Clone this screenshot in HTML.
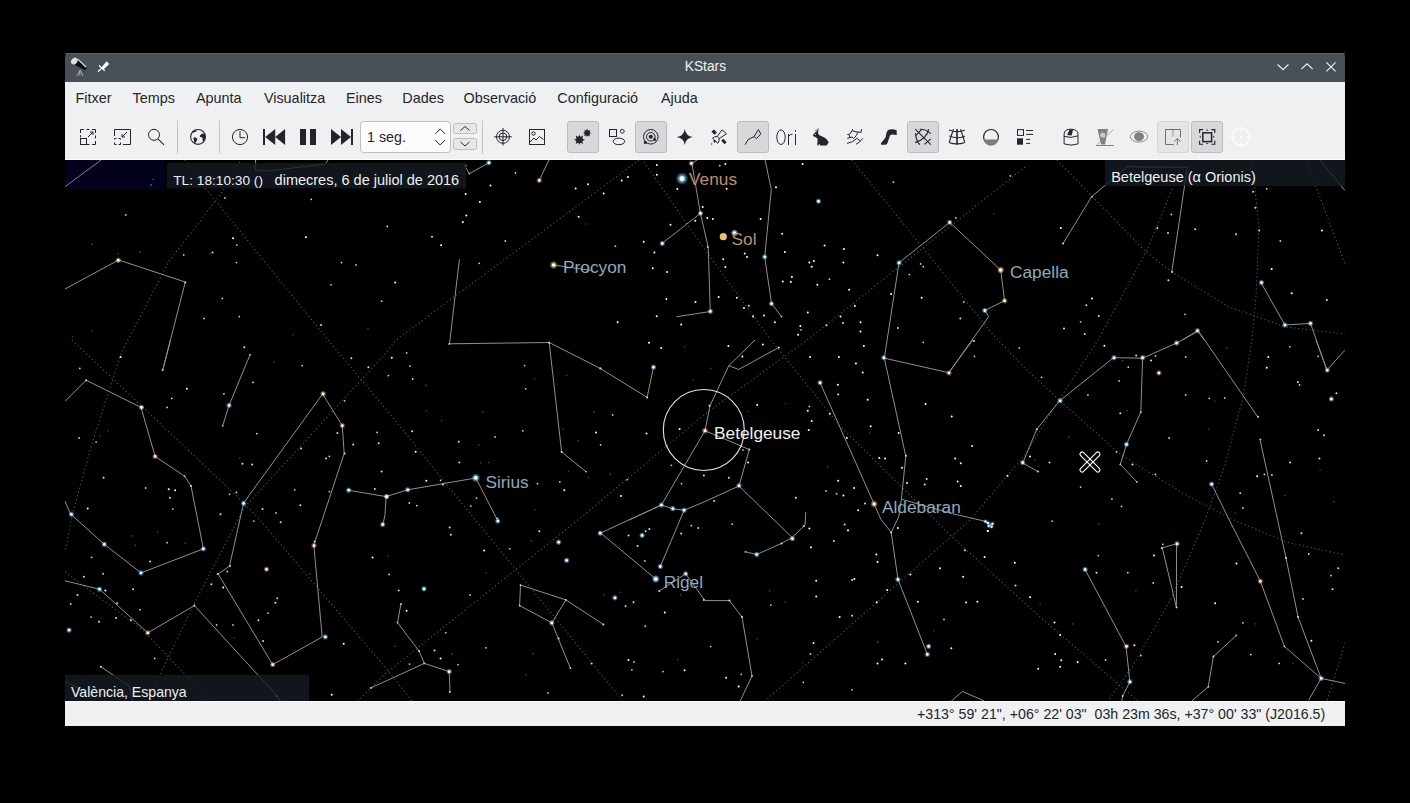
<!DOCTYPE html>
<html><head><meta charset="utf-8">
<style>
html,body{margin:0;padding:0;background:#000;width:1410px;height:803px;overflow:hidden;font-family:"Liberation Sans",sans-serif;}
.abs{position:absolute;}
#title{left:65px;top:53px;width:1280px;height:29px;background:#475057;border-radius:4px 4px 0 0;}
#menu{left:65px;top:82px;width:1280px;height:31px;background:#eff0f1;}
#tool{left:65px;top:113px;width:1280px;height:47px;background:#eff0f1;border-bottom:0;}
#tline{left:65px;top:159px;width:1280px;height:1px;background:#fcfcfc;}
#mapwrap{left:65px;top:160px;width:1280px;height:541px;overflow:hidden;}
#status{left:65px;top:701px;width:1280px;height:25px;background:#eff0f1;}
#sline{left:65px;top:701px;width:1280px;height:1px;background:#fcfcfc;}
.mi{position:absolute;top:89px;font-size:14.4px;color:#232629;white-space:pre;line-height:18px;}
</style></head><body>
<div class="abs" id="title"></div>
<div class="abs" style="left:684.7px;top:58px;color:#eff0f1;font-size:13.8px;line-height:18px;">KStars</div><div class="abs" style="left:65px;top:53px;width:1280px;height:1px;background:#5b656d;border-radius:4px 4px 0 0"></div>
<div class="abs" id="menu"></div>
<div class="mi" style="left:75.5px">Fitxer</div>
<div class="mi" style="left:132.6px">Temps</div>
<div class="mi" style="left:195.9px">Apunta</div>
<div class="mi" style="left:263.9px">Visualitza</div>
<div class="mi" style="left:346px">Eines</div>
<div class="mi" style="left:402.3px">Dades</div>
<div class="mi" style="left:463.5px">Observació</div>
<div class="mi" style="left:557.3px">Configuració</div>
<div class="mi" style="left:661px">Ajuda</div>
<div class="abs" id="tool"></div>
<div class="abs" id="tline"></div>
<div class="abs" style="left:0;top:0;width:1410px;height:160px;"><svg width="1410" height="160" viewBox="0 0 1410 160" style="position:absolute;left:0;top:0">
<!-- title bar icons -->
<path d="M72.5,63.5 L77.5,57.8 L86.8,67.5 L85,70.2 Z" fill="#0a0a0a"/>
<path d="M77.2,58.6 L86,67" stroke="#e8e8e8" stroke-width="1.2" fill="none"/>
<ellipse cx="74.3" cy="61.1" rx="3" ry="3.6" transform="rotate(40 74.3 61.1)" fill="#dcdcdc"/>
<path d="M80.2,70 L77,76 M80.2,70 L83,76 M79.8,71 L79.8,75.5" stroke="#b8b8b0" stroke-width="0.9" fill="none"/>
<path d="M101.5,67.5 L106.5,61.3 L109.3,64 L103.5,69.5 Z" fill="#fafafa"/>
<path d="M99,65.5 L104.8,70.8 M97.9,71.8 L101.5,68.4" stroke="#fafafa" stroke-width="1.3" fill="none"/>
<g stroke="#eff0f1" stroke-width="1.15" fill="none">
  <path d="M1277.6,64.5 L1283,69.6 L1288.4,64.5"/>
  <path d="M1301.3,69.1 L1307,63.9 L1312.7,69.1"/>
  <path d="M1326.4,62.4 L1335.6,71.4 M1335.6,62.4 L1326.4,71.4"/>
</g>
<!-- separators -->
<g stroke="#c0c2c4" stroke-width="1">
  <line x1="177.5" y1="120.5" x2="177.5" y2="153.5"/>
  <line x1="219.5" y1="120.5" x2="219.5" y2="153.5"/>
  <line x1="482.5" y1="120.5" x2="482.5" y2="153.5"/>
</g>
<!-- checked buttons -->
<g fill="#d6d8da" stroke="#b9bbbe" stroke-width="1">
  <rect x="567.5" y="121.5" width="31" height="31" rx="2.5"/>
  <rect x="635.5" y="121.5" width="31" height="31" rx="2.5"/>
  <rect x="737.5" y="121.5" width="31" height="31" rx="2.5"/>
  <rect x="907.5" y="121.5" width="31" height="31" rx="2.5"/>
  <rect x="1191.5" y="121.5" width="31" height="31" rx="2.5"/>
</g>
<rect x="1157.5" y="121.5" width="31" height="31" rx="2.5" fill="#e4e5e7" stroke="#d2d4d6" stroke-width="1"/>
<g fill="none" stroke="#232629" stroke-width="1">
  <!-- zoom fit -->
  <path d="M80.5,133 V129.5 H84 M86.5,129.5 H89.5 M92,129.5 H95.5 V133 M95.5,135.5 V138.5 M95.5,141 V144.5 H92 M89.5,144.5 H86.5" stroke-dasharray="none"/>
  <rect x="80.5" y="138.5" width="6" height="6"/>
  <path d="M80.5,135.2 V137.4" />
  <path d="M88,137 L93,132 M90,132 H93 V135"/>
  <!-- zoom shrink -->
  <path d="M114.5,136 V129.5 H130.5 V144.5 H123"/>
  <path d="M114.5,138.5 V139.5 M114.5,142.5 V144.5 H116.5 M118.5,144.5 H120.5 V142.5 M120.5,139.5 V138.5 H118.5 M116.5,138.5 H114.5"/>
  <path d="M127,132 L122,137 M122,134 V137 H125"/>
  <!-- search -->
  <circle cx="154" cy="134.8" r="5.5"/>
  <path d="M158,138.8 L164,144.8" stroke-width="1.1"/>
  <!-- clock -->
  <circle cx="240" cy="137" r="7.6"/>
  <path d="M240,131 V137.7 H245"/>
  <!-- target -->
  <circle cx="503" cy="136.8" r="6.5"/>
  <circle cx="503" cy="136.8" r="3.8"/>
  <path d="M503,128 V145.6 M494.2,136.8 H511.8"/>
  <!-- image -->
  <rect x="529.5" y="129.5" width="15" height="15"/>
  <circle cx="533.5" cy="133.5" r="1.7"/>
  <path d="M530,142 L534,138 L536,140 L539.5,136.5 L543.5,139.5"/>
  <!-- shapes -->
  <rect x="609.5" y="129.5" width="7" height="7"/>
  <circle cx="622.3" cy="131.3" r="1.9"/>
  <ellipse cx="618.9" cy="141.4" rx="5.8" ry="3.3"/>
  <!-- solar -->
  <circle cx="650.8" cy="136.8" r="7.3"/>
  <circle cx="650.8" cy="136.8" r="4.3"/>
  <!-- constellation line -->
  <path d="M745.2,144.7 L748,139.6 L754,136.6 L758.4,129.6 L760.8,133.9 L756.5,138.6 L754,136.6" stroke-linejoin="round"/>
  <!-- Ori -->
  <ellipse cx="781" cy="137.2" rx="4.2" ry="7.3"/>
  <path d="M788.5,145 V134 M788.5,136.5 Q790,134 792.5,134.2 M795.5,145 V134 M795.5,130 V131.5"/>
  <!-- art -->
  <path d="M847.2,134.5 L849.8,134.1 L852.1,130.7 L852.6,129.2 M852.1,130.7 L855.1,131.5 L857.7,132 L861.1,132.4 L861.5,129.2 M857.7,132 L856.4,135.4 L854.7,137.5 L853.4,138.3 L852.1,137.1 L850,137.5 L849.1,134.9 M847.2,138.3 L850,137.5 M847,143.4 Q853,142.6 856.8,138.3 L860.2,140.9 M856,144.3 Q860.2,142.2 862.8,138.3" stroke-linejoin="round"/>
  <!-- grid -->
  <path d="M915.2,129.2 L930.8,144.7 M915,142.6 Q927,139 928.6,129.2 M915.4,133.4 Q916,140 919.7,144.7 M919.7,129.2 Q926,129 930.8,133.6 M924.4,144.3 L930.8,138.8 M915.4,135.8 L921.8,129.4" stroke-width="1.1"/>
  <!-- eq grid -->
  <path d="M949,130 Q957,133 964.8,130.3 M949.3,136 Q957,139.4 964.8,136.2 M949,142.4 Q957,145.4 964.8,142.4 M953.5,129.2 Q951,136 949.3,142.4 M960.5,129.2 Q963,136 964.8,142.4" stroke-width="1.1"/><path d="M957,129 V144.8" stroke-width="1.6"/>
  <!-- horizon -->
  <circle cx="991" cy="136.9" r="7.4" stroke-width="1.2"/>
  <!-- list -->
  <rect x="1017.5" y="129.6" width="6" height="5.8"/>
  <path d="M1026.2,130.5 H1033.1 M1026.2,134.4 H1033.1 M1026.2,139.4 H1030.1 M1026.2,143.4 H1030.1"/>
  <!-- dome -->
  <path d="M1064.1,143.9 V134.2 Q1064.1,129 1071.1,129.2 Q1078,129.5 1078,134.2 V143.9 Q1071.1,146.4 1064.1,143.9 Z M1064.1,136.4 Q1071.1,138.6 1078,135.9"/>
</g>
<g fill="#232629">
  <!-- globe -->
  <circle cx="198.05" cy="136.96" r="7.4" fill="none" stroke="#232629" stroke-width="1.1"/>
  <path d="M191.2,133.4 L196.7,131.2 L195.9,130.1 L192.6,130.9 Z M199.7,136.1 L201.3,133.9 L204.1,133.4 L205.2,135 L204.9,139.7 L203,142.4 L202.4,137.5 L200.2,137 Z M193.4,137.8 L195.3,137.2 L197.5,138.9 L196.4,141.3 L195,143.5 L194.2,142.4 L193.9,140.2 Z"/>
  <!-- skip back -->
  <rect x="263" y="129" width="2" height="16"/>
  <path d="M265.2,137 L275.2,129 V145 Z M275.2,137 L285.1,129 V145 Z"/>
  <!-- pause -->
  <rect x="300" y="129" width="6" height="16"/>
  <rect x="310" y="129" width="6" height="16"/>
  <!-- skip fwd -->
  <path d="M331,129 L341,137 L331,145 Z M341,129 L351,137 L341,145 Z"/>
  <rect x="351" y="129" width="2" height="16"/>
  <!-- stars -->
  <circle cx="579.4" cy="139.8" r="3.2"/>
  <circle cx="587.2" cy="132.8" r="2.6"/>
  <path d="M579.4,134.5 L580.4,137 L583,135.5 L582.3,138.5 L585,139.8 L582.3,141 L583,144 L580.3,142.6 L579.4,145 L578.4,142.6 L575.8,144 L576.5,141 L574,139.8 L576.5,138.5 L575.8,135.5 L578.4,137 Z"/>
  <path d="M587.2,128.5 L588,131 L590.5,130 L589.4,132.4 L591.4,133.5 L589.2,134 L590,136.6 L587.6,135.4 L587,137.2 L586.2,135.3 L583.8,136 L585,134 L583,133 L585,132.1 L584.3,129.8 L586.4,130.8 Z"/>
  <!-- solar -->
  <circle cx="650.8" cy="136.8" r="2"/>
  <circle cx="645.4" cy="142.4" r="1.6"/>
  <circle cx="654.6" cy="139.4" r="1.5"/>
  <!-- 4 star -->
  <path d="M684.8,129 Q685.8,136 692.8,137 Q685.8,138 684.8,145 Q683.8,138 676.8,137 Q683.8,136 684.8,129 Z"/>
  <!-- satellite -->
  <path d="M711.4,131.5 L714,129.4 L716.9,132.4 L714.4,134.7 Z M721.2,140.5 L723.3,138.8 L726.7,142.2 L724.4,144.3 Z M713.1,140.8 L714.6,139.8 L716,141.6 L714.5,143 Z"/><circle cx="711.7" cy="144" r="0.7"/>
  <path d="M717.4,136.4 L722,129.8 L726.5,133.8 L719.1,138.6 M717.4,136.4 Q714,136.5 712.5,138.2 L717.8,143.3 Q719.6,141 719.1,138.6 Z" fill="none" stroke="#232629" stroke-width="1"/>
  <!-- rabbit -->
  <path d="M815.96,128.13 L816.81,132.38 L817.87,128.13 L818.51,128.34 L818.09,133.66 Q819.36,135.79 822.77,136.64 Q827.02,138.34 828.72,142.6 L827.02,144.72 L826.6,145.57 H820.21 L819.36,143.87 L818.09,145.57 H817.23 L817.66,138.77 Q815.96,137.06 813.4,136.21 Q812.55,134.94 813.83,133.66 L815.53,132.38 Z"/><circle cx="815.5" cy="134.5" r="0.5" fill="#eff0f1"/>
  <!-- milky way S -->
  <path d="M881,143 Q884.4,139.6 885.7,137.1 Q886.1,132.4 887.8,130.3 Q889.9,129 892.9,129.2 L896.7,130.3 L896.7,134.9 L892.9,134.5 Q890.8,134.1 889.9,135.8 Q888.6,139.6 887.8,142.2 Q886.9,144.7 885.2,144.7 L881,144.7 Z"/>
  <!-- list filled -->
  <rect x="1017" y="138.3" width="6" height="6.4"/>
  <!-- fullscreen -->
  <path d="M1207.2,129.3 l-1.3,1.3 h2.6 z M1207.2,144.3 l-1.3,-1.3 h2.6 z M1199.4,136.8 l1.3,-1.3 v2.6 z M1214.6,136.8 l-1.3,-1.3 v2.6 z"/>
</g>
<g fill="none" stroke="#232629">
  <rect x="1202.8" y="132.8" width="8.8" height="8.8" stroke-width="1.5"/>
  <path d="M1199.6,133 V129.6 H1203 M1211.4,129.6 H1214.8 V133 M1214.8,140.8 V144.2 H1211.4 M1203,144.2 H1199.6 V140.8" stroke-width="1.1"/>
  <path d="M1067.1,134.9 L1069.6,129.5 L1073.1,129.5 L1071.6,135.4 Z" fill="#232629" stroke="none"/>
</g>
<!-- horizon fill -->
<path d="M983.6,139.5 H998.4 A7.5,7.5 0 0 1 983.6,139.5 Z" fill="#7b7c7e"/>
<!-- grey telescope -->
<g fill="#7f8082">
  <path d="M1097.5,129 H1108 L1105,144.5 H1101 Z"/>
  <rect x="1096" y="145" width="18" height="1"/>
  <path d="M1096.5,145 L1113.5,129.5" stroke="#9a9b9d" stroke-width="0.8" fill="none"/>
</g>
<circle cx="1102.8" cy="135" r="2.6" fill="#c8c9cb"/>
<!-- galaxy -->
<ellipse cx="1139" cy="136.6" rx="8.7" ry="5.5" fill="none" stroke="#8a8b8d" stroke-width="1"/>
<ellipse cx="1139" cy="136.6" rx="5" ry="4.3" fill="#7f8082"/>
<!-- upload -->
<g fill="none" stroke="#707173" stroke-width="1">
  <path d="M1180.5,137.5 V129.5 H1165.5 V144.5 H1173.8"/>
  <path d="M1177.4,145 V138.7 M1174.2,141.6 L1177.4,138.5 L1180.6,141.6"/>
  <path d="M1172.3,130 L1173.4,131.1 L1172.3,132.2 L1173.4,133.3 L1172.3,134.4 L1173.4,135.5 L1172.5,136.6" stroke-width="0.8"/>
</g>
<!-- light crosshair -->
<g fill="none" stroke="#fbfbfb" stroke-width="1.4">
  <circle cx="1240.9" cy="136.8" r="8.6"/>
  <path d="M1240.9,125.8 V131.5 M1240.9,142.1 V147.8 M1229.9,136.8 H1235.6 M1246.2,136.8 H1251.9"/>
</g>
<circle cx="1240.9" cy="136.8" r="1.4" fill="#fbfbfb"/>
<!-- spinbox -->
<rect x="360.5" y="121.5" width="90" height="31" rx="3" fill="#fcfcfc" stroke="#bcbebf"/>
<text x="367" y="141.8" font-family="Liberation Sans" font-size="14.3" fill="#232629">1 seg.</text>
<g fill="none" stroke="#232629" stroke-width="1">
  <path d="M435.3,133.9 L440.2,129 L445.1,133.9"/>
  <path d="M435.3,140 L440.2,145 L445.1,140"/>
</g>
<rect x="453.5" y="123.5" width="23" height="10" rx="2" fill="#e6e7e9" stroke="#bcbebf"/>
<rect x="453.5" y="138.5" width="23" height="11" rx="2" fill="#e6e7e9" stroke="#bcbebf"/>
<g fill="none" stroke="#232629" stroke-width="1">
  <path d="M460.5,130.5 L465,126.5 L469.5,130.5"/>
  <path d="M460.5,142 L465,146 L469.5,142"/>
</g>
</svg>
</div>
<div class="abs" id="mapwrap"><svg id="map" width="1280" height="541" viewBox="65 160 1280 541">
<rect x="65" y="160" width="1280" height="541" fill="#000"/>
<g fill="none" stroke="#6a90a8" stroke-width="1.1" stroke-dasharray="1.2 2.7" stroke-linecap="butt" opacity="0.62">
<polyline points="240.0,162.0 222.0,192.0 195.0,228.0 169.7,260.0 121.0,353.5 91.0,447.0 72.5,514.0 65.0,552.0"/>
<polyline points="185.0,160.0 206.0,189.0 328.0,340.0 385.0,408.0 473.0,517.0 622.0,700.0"/>
<polyline points="639.0,160.0 396.0,340.0 385.0,354.0 244.0,508.0 194.0,604.0 156.0,683.0 150.0,701.0"/>
<polyline points="1025.0,167.0 807.0,340.0 705.0,414.0 578.0,520.0 385.0,674.0 358.0,701.0"/>
<polyline points="644.0,162.0 705.0,250.0 771.0,340.0 839.0,425.0 949.0,534.0 1039.0,616.0 1138.0,701.0"/>
<polyline points="852.0,160.0 995.0,337.0 1025.0,368.0 1059.0,400.0 1120.0,454.0 1184.0,494.0 1234.0,520.0 1286.0,542.0 1345.0,555.0"/>
<polyline points="1184.0,160.0 1148.0,248.0 1098.0,340.0 1059.0,400.0 1025.0,455.0 970.0,520.0 765.0,701.0"/>
<polyline points="1057.0,160.0 1145.0,251.0 1172.0,272.0 1229.0,307.0 1286.0,327.0 1345.0,334.0"/>
<polyline points="1252.0,160.0 1259.0,228.0 1256.0,296.0 1252.0,340.0 1243.0,397.0 1225.0,465.0 1205.0,520.0 1172.0,597.0 1132.0,667.0 1108.0,701.0"/>
<polyline points="1306.0,160.0 1345.0,264.0"/>
<polyline points="72.0,340.0 244.0,503.0 260.0,520.0 385.0,667.0 412.0,701.0"/>
<polyline points="65.0,572.0 144.0,631.0 210.0,701.0"/>
<polyline points="1345.0,643.0 1327.0,701.0"/>
</g>
<g fill="none" stroke="#a9a9a6" stroke-width="1" opacity="0.85" stroke-linejoin="round">
<polyline points="65.0,289.0 118.6,260.0 185.3,282.0 162.6,370.6"/>
<polyline points="65.0,186.7 101.2,160.0"/>
<polyline points="255.6,160.0 255.6,170.0 268.0,171.0 325.5,164.0 328.0,160.0"/>
<polyline points="464.5,166.0 469.4,173.6 489.0,162.7"/>
<polyline points="539.3,180.4 548.9,160.0"/>
<polyline points="459.4,259.2 449.5,343.8 549.2,342.5 561.6,451.9 585.9,471.6"/>
<polyline points="549.2,342.5 600.2,368.4 647.1,397.4 653.5,367.2"/>
<polyline points="697.2,160.0 691.9,163.2 700.4,213.4 708.2,246.9 710.3,311.5 676.4,316.8"/>
<polyline points="700.4,213.4 662.2,243.3"/>
<polyline points="765.1,160.0 771.3,189.5 764.7,256.9 771.5,303.4 781.5,316.6"/>
<polyline points="949.7,222.4 1000.7,270.0 1004.6,300.7 984.8,310.5 988.7,316.6 948.8,372.7 884.3,358.2 899.0,262.8 949.7,222.4"/>
<polyline points="948.8,372.7 972.8,340.0 971.7,340.0"/>
<polyline points="884.3,358.2 905.8,456.2 901.4,499.2 898.6,517.3 891.2,532.3"/>
<polyline points="901.4,499.2 952.3,513.7 985.8,521.4"/>
<polyline points="820.1,382.7 874.1,503.9 880.8,519.2 891.2,532.3 898.0,579.5 927.4,654.4"/>
<polyline points="1063.1,243.5 1091.5,196.8 1127.1,166.8 1187.3,167.3 1171.8,271.7"/>
<polyline points="1022.7,463.0 1036.8,429.2 1059.7,400.8 1113.5,357.7 1142.6,358.2 1176.6,343.0 1198.4,331.0 1257.6,416.7"/>
<polyline points="1022.7,463.0 1038.0,471.6"/>
<polyline points="1142.6,358.2 1140.8,412.0 1126.5,444.4 1120.3,464.4 1136.9,481.9"/>
<polyline points="1261.0,282.6 1284.9,325.0 1310.5,323.4 1326.9,370.0 1345.0,350.2"/>
<polyline points="1316.0,340.0 1326.9,370.0"/>
<polyline points="1320.0,160.0 1345.0,190.6"/>
<polyline points="1182.7,340.0 1197.5,330.7 1204.3,340.0"/>
<polyline points="1259.9,439.2 1286.0,558.0 1298.0,616.9 1321.2,678.4 1345.0,683.4"/>
<polyline points="1211.6,484.1 1229.3,520.0 1260.4,581.3 1284.4,646.4 1321.2,678.4 1308.7,700.0"/>
<polyline points="1162.3,547.9 1176.6,543.8 1176.4,607.4 1162.3,547.9"/>
<polyline points="1085.1,569.5 1126.0,646.4 1129.9,681.8 1122.6,696.0 1121.7,701.0"/>
<polyline points="1236.5,635.3 1213.4,656.6 1208.2,686.8 1191.8,701.0"/>
<polyline points="755.0,340.0 728.8,365.6 738.6,369.5 778.8,347.5"/>
<polyline points="728.8,365.6 710.0,405.8 705.0,430.7"/>
<polyline points="705.0,430.7 749.3,449.6 739.0,486.0 792.2,537.5 805.0,525.2 805.8,512.0"/>
<polyline points="792.2,537.5 781.5,543.4 756.8,554.5 745.4,551.8"/>
<polyline points="739.0,486.0 705.0,501.5 684.1,510.2 673.3,508.9 661.4,505.0 600.6,533.0 655.8,579.0"/>
<polyline points="661.4,505.0 705.0,430.7"/>
<polyline points="684.1,510.2 660.3,566.5"/>
<polyline points="659.2,591.0 685.7,573.8 705.0,600.6"/>
<polyline points="629.0,520.0 661.4,505.0"/>
<polyline points="705.0,600.6 729.5,600.6 742.0,617.0 752.0,675.9 740.2,701.0"/>
<polyline points="951.3,701.0 962.6,691.4 984.2,701.0"/>
<polyline points="65.0,401.3 86.1,380.2 141.0,407.4 155.1,456.4 184.6,476.2 191.0,486.0 203.4,548.8 141.0,572.9 104.3,544.3 70.4,513.9 65.0,501.0"/>
<polyline points="170.5,340.0 162.6,370.6"/>
<polyline points="250.0,354.8 229.0,405.4 222.7,425.8"/>
<polyline points="243.6,503.0 322.6,394.0 342.3,425.6 344.2,453.5 313.8,545.2 322.2,637.0 272.7,664.6 218.2,574.0 229.5,566.1 243.6,503.0"/>
<polyline points="348.3,490.2 386.0,496.6 407.7,489.8 475.8,478.0 497.8,520.7"/>
<polyline points="386.0,496.6 385.0,514.8 382.8,525.2"/>
<polyline points="65.0,580.8 99.5,589.2 147.8,632.8 194.4,605.6 276.1,694.8 280.0,701.0"/>
<polyline points="100.9,666.8 129.2,686.1 132.6,701.0"/>
<polyline points="65.0,681.1 85.4,692.5"/>
<polyline points="370.7,688.0 424.3,663.4 449.2,671.6 450.1,692.0"/>
<polyline points="424.3,663.4 419.0,651.0 397.5,622.6 400.9,604.0"/>
<polyline points="520.5,585.1 519.6,605.6 551.8,622.8 565.9,599.9 520.5,585.1"/>
<polyline points="565.9,599.9 603.3,624.4"/>
<polyline points="551.8,622.8 570.4,668.2"/>
<polyline points="553.6,265.0 591.5,270.5"/>
</g>
<defs>
<radialGradient id="gw"><stop offset="0" stop-color="#fff"/><stop offset="0.3" stop-color="#fff"/><stop offset="0.5" stop-color="#c8e0ff" stop-opacity="0.75"/><stop offset="1" stop-color="#c8e0ff" stop-opacity="0"/></radialGradient>
<radialGradient id="gb"><stop offset="0" stop-color="#fff"/><stop offset="0.3" stop-color="#fff"/><stop offset="0.5" stop-color="#5fb8e0" stop-opacity="0.75"/><stop offset="1" stop-color="#5fb8e0" stop-opacity="0"/></radialGradient>
<radialGradient id="go"><stop offset="0" stop-color="#fff"/><stop offset="0.3" stop-color="#fff"/><stop offset="0.5" stop-color="#d08a50" stop-opacity="0.75"/><stop offset="1" stop-color="#d08a50" stop-opacity="0"/></radialGradient>
<radialGradient id="gt"><stop offset="0" stop-color="#fff"/><stop offset="0.3" stop-color="#fff"/><stop offset="0.5" stop-color="#5f8f8f" stop-opacity="0.75"/><stop offset="1" stop-color="#5f8f8f" stop-opacity="0"/></radialGradient>
<radialGradient id="gy"><stop offset="0" stop-color="#fff"/><stop offset="0.3" stop-color="#fff"/><stop offset="0.5" stop-color="#c0b070" stop-opacity="0.75"/><stop offset="1" stop-color="#c0b070" stop-opacity="0"/></radialGradient>
<radialGradient id="gr"><stop offset="0" stop-color="#fff"/><stop offset="0.3" stop-color="#fff"/><stop offset="0.5" stop-color="#d88040" stop-opacity="0.75"/><stop offset="1" stop-color="#d88040" stop-opacity="0"/></radialGradient>
</defs>
<g>
<circle cx="233.0" cy="238.3" r="1.0" fill="#ffffff" opacity="1"/>
<circle cx="306.0" cy="237.2" r="1.0" fill="#ffffff" opacity="1"/>
<circle cx="212.5" cy="252.6" r="1.0" fill="#bfe3ff" opacity="1"/>
<circle cx="209.8" cy="253.7" r="0.8" fill="#5f8f8f" opacity="0.55"/>
<circle cx="236.4" cy="262.6" r="0.9" fill="#f2c79a" opacity="1"/>
<circle cx="236.8" cy="245.1" r="0.9" fill="#f2c79a" opacity="1"/>
<circle cx="183.7" cy="254.9" r="0.9" fill="#f2c79a" opacity="1"/>
<circle cx="222.3" cy="298.4" r="0.9" fill="#f2c79a" opacity="1"/>
<circle cx="239.3" cy="316.6" r="0.9" fill="#f2c79a" opacity="1"/>
<circle cx="204.1" cy="318.4" r="0.9" fill="#e8dca0" opacity="1"/>
<circle cx="311.3" cy="199.3" r="0.9" fill="#e8dca0" opacity="1"/>
<circle cx="341.4" cy="262.6" r="0.9" fill="#e8dca0" opacity="1"/>
<circle cx="356.0" cy="264.9" r="0.9" fill="#f2c79a" opacity="1"/>
<circle cx="331.0" cy="284.8" r="0.9" fill="#f2c79a" opacity="1"/>
<circle cx="381.6" cy="301.2" r="0.9" fill="#e8dca0" opacity="1"/>
<circle cx="368.0" cy="329.1" r="0.8" fill="#5f8f8f" opacity="0.55"/>
<circle cx="293.1" cy="334.8" r="0.8" fill="#5f8f8f" opacity="0.55"/>
<circle cx="321.0" cy="325.0" r="1.0" fill="#bfe3ff" opacity="1"/>
<circle cx="125.8" cy="214.9" r="0.9" fill="#f2c79a" opacity="1"/>
<circle cx="118.3" cy="253.7" r="0.8" fill="#5f8f8f" opacity="0.55"/>
<circle cx="139.9" cy="251.9" r="0.8" fill="#5f8f8f" opacity="0.55"/>
<circle cx="92.2" cy="330.7" r="0.8" fill="#5f8f8f" opacity="0.55"/>
<circle cx="72.5" cy="337.0" r="0.8" fill="#5f8f8f" opacity="0.55"/>
<circle cx="225.0" cy="197.9" r="0.9" fill="#f2c79a" opacity="1"/>
<circle cx="118.3" cy="260.3" r="3.2" fill="url(#gy)"/>
<circle cx="185.3" cy="282.6" r="1.0" fill="#bfe3ff" opacity="1"/>
<circle cx="91.8" cy="244.4" r="0.8" fill="#5f8f8f" opacity="0.55"/>
<circle cx="150.8" cy="184.5" r="0.9" fill="#f2c79a" opacity="1"/>
<circle cx="490.5" cy="185.6" r="1.0" fill="#ffffff" opacity="1"/>
<circle cx="465.6" cy="194.0" r="1.0" fill="#ffffff" opacity="1"/>
<circle cx="479.9" cy="202.0" r="1.0" fill="#ffffff" opacity="1"/>
<circle cx="466.3" cy="215.6" r="1.0" fill="#ffffff" opacity="1"/>
<circle cx="462.8" cy="222.0" r="1.0" fill="#ffffff" opacity="1"/>
<circle cx="441.1" cy="245.3" r="1.0" fill="#ffffff" opacity="1"/>
<circle cx="432.0" cy="236.7" r="1.0" fill="#bfe3ff" opacity="1"/>
<circle cx="395.2" cy="282.6" r="1.0" fill="#ffffff" opacity="1"/>
<circle cx="387.3" cy="226.5" r="0.9" fill="#e8dca0" opacity="1"/>
<circle cx="505.3" cy="241.0" r="0.9" fill="#f2c79a" opacity="1"/>
<circle cx="479.2" cy="263.3" r="0.9" fill="#f2c79a" opacity="1"/>
<circle cx="539.3" cy="180.4" r="3.2" fill="url(#go)"/>
<circle cx="575.6" cy="188.4" r="1.0" fill="#ffffff" opacity="1"/>
<circle cx="588.1" cy="184.3" r="1.0" fill="#ffffff" opacity="1"/>
<circle cx="603.6" cy="193.4" r="1.0" fill="#ffffff" opacity="1"/>
<circle cx="578.6" cy="216.7" r="1.0" fill="#ffffff" opacity="1"/>
<circle cx="621.7" cy="180.4" r="1.0" fill="#ffffff" opacity="1"/>
<circle cx="627.9" cy="177.0" r="1.0" fill="#ffffff" opacity="1"/>
<circle cx="656.9" cy="165.0" r="1.0" fill="#ffffff" opacity="1"/>
<circle cx="656.9" cy="174.8" r="1.0" fill="#ffffff" opacity="1"/>
<circle cx="677.3" cy="189.1" r="1.0" fill="#ffffff" opacity="1"/>
<circle cx="670.5" cy="224.7" r="1.0" fill="#ffffff" opacity="1"/>
<circle cx="643.7" cy="241.7" r="1.0" fill="#ffffff" opacity="1"/>
<circle cx="654.4" cy="252.6" r="1.0" fill="#ffffff" opacity="1"/>
<circle cx="652.8" cy="268.3" r="1.0" fill="#ffffff" opacity="1"/>
<circle cx="667.1" cy="271.9" r="1.0" fill="#ffffff" opacity="1"/>
<circle cx="666.4" cy="298.9" r="1.0" fill="#ffffff" opacity="1"/>
<circle cx="695.5" cy="301.9" r="1.0" fill="#ffffff" opacity="1"/>
<circle cx="656.7" cy="316.2" r="1.0" fill="#ffffff" opacity="1"/>
<circle cx="681.2" cy="324.5" r="1.0" fill="#ffffff" opacity="1"/>
<circle cx="617.6" cy="322.3" r="1.0" fill="#ffffff" opacity="1"/>
<circle cx="585.9" cy="224.0" r="0.8" fill="#5f8f8f" opacity="0.55"/>
<circle cx="615.4" cy="246.2" r="0.9" fill="#f2c79a" opacity="1"/>
<circle cx="515.5" cy="172.9" r="0.9" fill="#e8dca0" opacity="1"/>
<circle cx="691.4" cy="163.4" r="3.2" fill="url(#go)"/>
<circle cx="700.5" cy="213.3" r="3.2" fill="url(#gy)"/>
<circle cx="695.3" cy="220.8" r="1.0" fill="#ffffff" opacity="1"/>
<circle cx="702.7" cy="207.0" r="1.0" fill="#ffffff" opacity="1"/>
<circle cx="662.3" cy="243.5" r="3.2" fill="url(#gb)"/>
<circle cx="488.9" cy="162.7" r="3.2" fill="url(#gb)"/>
<circle cx="465.6" cy="165.7" r="1.0" fill="#bfe3ff" opacity="1"/>
<circle cx="469.4" cy="173.6" r="0.9" fill="#f2c79a" opacity="1"/>
<circle cx="802.6" cy="163.9" r="1.0" fill="#ffffff" opacity="1"/>
<circle cx="725.4" cy="164.1" r="1.0" fill="#ffffff" opacity="1"/>
<circle cx="719.8" cy="165.7" r="0.9" fill="#f2c79a" opacity="1"/>
<circle cx="726.6" cy="188.8" r="1.0" fill="#ffffff" opacity="1"/>
<circle cx="776.0" cy="187.2" r="1.0" fill="#ffffff" opacity="1"/>
<circle cx="818.5" cy="201.3" r="3.2" fill="url(#gb)"/>
<circle cx="760.6" cy="219.0" r="1.0" fill="#ffffff" opacity="1"/>
<circle cx="712.9" cy="219.0" r="1.0" fill="#ffffff" opacity="1"/>
<circle cx="707.3" cy="217.9" r="1.0" fill="#ffffff" opacity="1"/>
<circle cx="782.2" cy="233.8" r="1.0" fill="#ffffff" opacity="1"/>
<circle cx="824.6" cy="245.6" r="1.0" fill="#ffffff" opacity="1"/>
<circle cx="843.9" cy="249.0" r="1.0" fill="#ffffff" opacity="1"/>
<circle cx="784.9" cy="251.9" r="1.0" fill="#ffffff" opacity="1"/>
<circle cx="809.4" cy="262.6" r="1.0" fill="#ffffff" opacity="1"/>
<circle cx="813.9" cy="261.0" r="1.0" fill="#ffffff" opacity="1"/>
<circle cx="811.7" cy="266.7" r="1.0" fill="#ffffff" opacity="1"/>
<circle cx="843.4" cy="262.6" r="1.0" fill="#ffffff" opacity="1"/>
<circle cx="877.5" cy="255.3" r="1.0" fill="#ffffff" opacity="1"/>
<circle cx="744.7" cy="253.5" r="1.0" fill="#ffffff" opacity="1"/>
<circle cx="747.0" cy="257.1" r="1.0" fill="#ffffff" opacity="1"/>
<circle cx="723.2" cy="259.2" r="1.0" fill="#ffffff" opacity="1"/>
<circle cx="725.4" cy="267.1" r="1.0" fill="#ffffff" opacity="1"/>
<circle cx="782.8" cy="281.4" r="1.0" fill="#ffffff" opacity="1"/>
<circle cx="791.9" cy="276.9" r="1.0" fill="#ffffff" opacity="1"/>
<circle cx="790.8" cy="281.9" r="1.0" fill="#ffffff" opacity="1"/>
<circle cx="817.3" cy="284.8" r="1.0" fill="#ffffff" opacity="1"/>
<circle cx="849.1" cy="289.8" r="1.0" fill="#ffffff" opacity="1"/>
<circle cx="829.4" cy="279.2" r="0.9" fill="#f2c79a" opacity="1"/>
<circle cx="736.8" cy="297.8" r="1.0" fill="#ffffff" opacity="1"/>
<circle cx="718.6" cy="296.9" r="1.0" fill="#ffffff" opacity="1"/>
<circle cx="744.0" cy="308.0" r="1.0" fill="#ffffff" opacity="1"/>
<circle cx="748.8" cy="305.7" r="1.0" fill="#bfe3ff" opacity="1"/>
<circle cx="753.1" cy="316.6" r="1.0" fill="#ffffff" opacity="1"/>
<circle cx="764.0" cy="315.5" r="1.0" fill="#ffffff" opacity="1"/>
<circle cx="774.9" cy="322.3" r="1.0" fill="#ffffff" opacity="1"/>
<circle cx="807.8" cy="312.5" r="1.0" fill="#ffffff" opacity="1"/>
<circle cx="800.3" cy="326.1" r="1.0" fill="#ffffff" opacity="1"/>
<circle cx="801.0" cy="329.8" r="0.9" fill="#f2c79a" opacity="1"/>
<circle cx="798.1" cy="334.8" r="1.0" fill="#ffffff" opacity="1"/>
<circle cx="840.5" cy="316.6" r="1.0" fill="#ffffff" opacity="1"/>
<circle cx="854.8" cy="305.9" r="1.0" fill="#ffffff" opacity="1"/>
<circle cx="860.5" cy="322.3" r="1.0" fill="#ffffff" opacity="1"/>
<circle cx="860.5" cy="331.4" r="1.0" fill="#ffffff" opacity="1"/>
<circle cx="843.0" cy="323.0" r="1.0" fill="#bfe3ff" opacity="1"/>
<circle cx="826.4" cy="325.2" r="1.0" fill="#bfe3ff" opacity="1"/>
<circle cx="891.1" cy="293.9" r="1.0" fill="#ffffff" opacity="1"/>
<circle cx="921.7" cy="297.8" r="1.0" fill="#ffffff" opacity="1"/>
<circle cx="897.9" cy="328.0" r="1.0" fill="#bfe3ff" opacity="1"/>
<circle cx="960.3" cy="318.4" r="1.0" fill="#bfe3ff" opacity="1"/>
<circle cx="909.3" cy="274.6" r="0.9" fill="#f2c79a" opacity="1"/>
<circle cx="920.6" cy="263.9" r="0.9" fill="#f2c79a" opacity="1"/>
<circle cx="923.3" cy="266.7" r="0.9" fill="#f2c79a" opacity="1"/>
<circle cx="963.7" cy="301.9" r="0.9" fill="#f2c79a" opacity="1"/>
<circle cx="955.8" cy="217.9" r="0.9" fill="#f2c79a" opacity="1"/>
<circle cx="1010.3" cy="175.9" r="0.9" fill="#f2c79a" opacity="1"/>
<circle cx="893.4" cy="182.2" r="0.9" fill="#f2c79a" opacity="1"/>
<circle cx="993.9" cy="213.8" r="0.8" fill="#5f8f8f" opacity="0.55"/>
<circle cx="710.4" cy="311.4" r="3.2" fill="url(#gb)"/>
<circle cx="764.7" cy="256.9" r="3.2" fill="url(#gb)"/>
<circle cx="771.5" cy="303.7" r="3.2" fill="url(#go)"/>
<circle cx="781.5" cy="316.6" r="0.9" fill="#f2c79a" opacity="1"/>
<circle cx="899.1" cy="262.8" r="3.2" fill="url(#gb)"/>
<circle cx="949.7" cy="222.4" r="3.2" fill="url(#gb)"/>
<circle cx="984.8" cy="310.5" r="3.2" fill="url(#gb)"/>
<circle cx="1004.6" cy="300.7" r="3.2" fill="url(#gy)"/>
<circle cx="1000.7" cy="270.1" r="3.2" fill="url(#go)"/>
<circle cx="707.7" cy="246.9" r="0.9" fill="#e8dca0" opacity="1"/>
<circle cx="1060.9" cy="228.1" r="1.0" fill="#ffffff" opacity="1"/>
<circle cx="1092.0" cy="298.4" r="1.0" fill="#ffffff" opacity="1"/>
<circle cx="1086.3" cy="305.3" r="1.0" fill="#bfe3ff" opacity="1"/>
<circle cx="1098.8" cy="315.9" r="1.0" fill="#bfe3ff" opacity="1"/>
<circle cx="1064.0" cy="328.4" r="1.0" fill="#bfe3ff" opacity="1"/>
<circle cx="1084.7" cy="334.1" r="1.0" fill="#bfe3ff" opacity="1"/>
<circle cx="1080.6" cy="321.8" r="0.9" fill="#f2c79a" opacity="1"/>
<circle cx="1253.1" cy="191.8" r="1.0" fill="#bfe3ff" opacity="1"/>
<circle cx="1255.4" cy="207.7" r="1.0" fill="#bfe3ff" opacity="1"/>
<circle cx="1259.2" cy="230.4" r="1.0" fill="#bfe3ff" opacity="1"/>
<circle cx="1236.1" cy="234.2" r="1.0" fill="#bfe3ff" opacity="1"/>
<circle cx="1195.2" cy="229.2" r="1.0" fill="#bfe3ff" opacity="1"/>
<circle cx="1168.0" cy="233.1" r="1.0" fill="#bfe3ff" opacity="1"/>
<circle cx="1157.3" cy="228.1" r="1.0" fill="#bfe3ff" opacity="1"/>
<circle cx="1171.4" cy="214.5" r="0.9" fill="#f2c79a" opacity="1"/>
<circle cx="1321.9" cy="230.4" r="1.0" fill="#ffffff" opacity="1"/>
<circle cx="1271.7" cy="268.9" r="1.0" fill="#ffffff" opacity="1"/>
<circle cx="1291.7" cy="293.2" r="1.0" fill="#ffffff" opacity="1"/>
<circle cx="1326.9" cy="300.0" r="1.0" fill="#bfe3ff" opacity="1"/>
<circle cx="1261.5" cy="282.6" r="3.2" fill="url(#gb)"/>
<circle cx="1284.9" cy="325.0" r="3.2" fill="url(#gb)"/>
<circle cx="1310.5" cy="323.4" r="3.2" fill="url(#gb)"/>
<circle cx="1168.4" cy="280.3" r="1.0" fill="#bfe3ff" opacity="1"/>
<circle cx="1172.1" cy="271.9" r="1.0" fill="#bfe3ff" opacity="1"/>
<circle cx="1185.0" cy="314.3" r="0.9" fill="#f2c79a" opacity="1"/>
<circle cx="1197.5" cy="330.7" r="3.2" fill="url(#go)"/>
<circle cx="1280.3" cy="241.0" r="0.9" fill="#f2c79a" opacity="1"/>
<circle cx="1092.0" cy="196.8" r="0.9" fill="#f2c79a" opacity="1"/>
<circle cx="1127.1" cy="166.8" r="0.8" fill="#5f8f8f" opacity="0.55"/>
<circle cx="1187.3" cy="167.3" r="0.8" fill="#5f8f8f" opacity="0.55"/>
<circle cx="1063.1" cy="243.5" r="1.0" fill="#bfe3ff" opacity="1"/>
<circle cx="1287.1" cy="170.2" r="0.8" fill="#5f8f8f" opacity="0.55"/>
<circle cx="1266.7" cy="188.8" r="0.9" fill="#e8dca0" opacity="1"/>
<circle cx="120.6" cy="357.0" r="1.0" fill="#ffffff" opacity="1"/>
<circle cx="186.9" cy="388.8" r="1.0" fill="#ffffff" opacity="1"/>
<circle cx="244.3" cy="347.3" r="1.0" fill="#bfe3ff" opacity="1"/>
<circle cx="250.0" cy="354.8" r="0.9" fill="#f2c79a" opacity="1"/>
<circle cx="162.6" cy="370.2" r="0.9" fill="#f2c79a" opacity="1"/>
<circle cx="79.8" cy="368.4" r="0.9" fill="#f2c79a" opacity="1"/>
<circle cx="171.7" cy="398.3" r="0.9" fill="#e8dca0" opacity="1"/>
<circle cx="167.1" cy="407.4" r="0.9" fill="#f2c79a" opacity="1"/>
<circle cx="223.9" cy="393.8" r="0.9" fill="#e8dca0" opacity="1"/>
<circle cx="229.1" cy="405.4" r="3.2" fill="url(#gb)"/>
<circle cx="222.7" cy="425.8" r="0.9" fill="#f2c79a" opacity="1"/>
<circle cx="323.1" cy="393.8" r="3.2" fill="url(#gy)"/>
<circle cx="344.6" cy="400.8" r="0.9" fill="#f2c79a" opacity="1"/>
<circle cx="342.3" cy="425.6" r="3.2" fill="url(#go)"/>
<circle cx="344.6" cy="453.5" r="1.0" fill="#bfe3ff" opacity="1"/>
<circle cx="326.0" cy="458.5" r="1.0" fill="#bfe3ff" opacity="1"/>
<circle cx="329.4" cy="456.4" r="0.9" fill="#f2c79a" opacity="1"/>
<circle cx="337.4" cy="433.1" r="1.0" fill="#bfe3ff" opacity="1"/>
<circle cx="353.2" cy="444.4" r="1.0" fill="#bfe3ff" opacity="1"/>
<circle cx="378.7" cy="443.3" r="1.0" fill="#bfe3ff" opacity="1"/>
<circle cx="377.1" cy="432.4" r="0.9" fill="#f2c79a" opacity="1"/>
<circle cx="351.4" cy="358.2" r="1.0" fill="#bfe3ff" opacity="1"/>
<circle cx="368.4" cy="367.2" r="1.0" fill="#bfe3ff" opacity="1"/>
<circle cx="273.8" cy="362.0" r="0.8" fill="#5f8f8f" opacity="0.55"/>
<circle cx="252.9" cy="382.4" r="0.9" fill="#f2c79a" opacity="1"/>
<circle cx="256.8" cy="433.7" r="0.9" fill="#f2c79a" opacity="1"/>
<circle cx="302.2" cy="365.6" r="0.9" fill="#f2c79a" opacity="1"/>
<circle cx="155.1" cy="456.4" r="3.2" fill="url(#gr)"/>
<circle cx="184.6" cy="476.2" r="0.9" fill="#f2c79a" opacity="1"/>
<circle cx="191.0" cy="485.9" r="1.0" fill="#bfe3ff" opacity="1"/>
<circle cx="141.5" cy="407.4" r="3.2" fill="url(#gy)"/>
<circle cx="86.1" cy="380.2" r="1.0" fill="#bfe3ff" opacity="1"/>
<circle cx="108.1" cy="430.8" r="0.8" fill="#5f8f8f" opacity="0.55"/>
<circle cx="100.2" cy="435.8" r="0.8" fill="#5f8f8f" opacity="0.55"/>
<circle cx="96.1" cy="442.1" r="0.9" fill="#f2c79a" opacity="1"/>
<circle cx="79.1" cy="438.0" r="0.9" fill="#f2c79a" opacity="1"/>
<circle cx="103.6" cy="477.8" r="1.0" fill="#bfe3ff" opacity="1"/>
<circle cx="145.6" cy="488.0" r="0.9" fill="#f2c79a" opacity="1"/>
<circle cx="168.7" cy="489.3" r="1.0" fill="#ffffff" opacity="1"/>
<circle cx="175.1" cy="490.2" r="1.0" fill="#ffffff" opacity="1"/>
<circle cx="169.9" cy="497.7" r="1.0" fill="#bfe3ff" opacity="1"/>
<circle cx="87.7" cy="508.4" r="1.0" fill="#ffffff" opacity="1"/>
<circle cx="172.8" cy="509.1" r="0.9" fill="#f2c79a" opacity="1"/>
<circle cx="71.4" cy="514.3" r="3.2" fill="url(#gb)"/>
<circle cx="243.6" cy="503.4" r="3.2" fill="url(#gb)"/>
<circle cx="242.5" cy="463.7" r="1.0" fill="#bfe3ff" opacity="1"/>
<circle cx="252.2" cy="464.4" r="1.0" fill="#bfe3ff" opacity="1"/>
<circle cx="239.8" cy="458.0" r="0.8" fill="#5f8f8f" opacity="0.55"/>
<circle cx="229.5" cy="494.3" r="0.9" fill="#f2c79a" opacity="1"/>
<circle cx="236.4" cy="492.5" r="0.9" fill="#f2c79a" opacity="1"/>
<circle cx="294.7" cy="489.8" r="0.9" fill="#f2c79a" opacity="1"/>
<circle cx="300.4" cy="505.2" r="1.0" fill="#bfe3ff" opacity="1"/>
<circle cx="348.7" cy="490.2" r="3.2" fill="url(#gb)"/>
<circle cx="374.8" cy="489.1" r="1.0" fill="#bfe3ff" opacity="1"/>
<circle cx="381.6" cy="471.6" r="1.0" fill="#bfe3ff" opacity="1"/>
<circle cx="329.4" cy="491.6" r="0.9" fill="#f2c79a" opacity="1"/>
<circle cx="301.0" cy="448.5" r="1.0" fill="#bfe3ff" opacity="1"/>
<circle cx="276.1" cy="512.9" r="0.9" fill="#f2c79a" opacity="1"/>
<circle cx="262.5" cy="509.1" r="1.0" fill="#bfe3ff" opacity="1"/>
<circle cx="220.5" cy="514.3" r="1.0" fill="#bfe3ff" opacity="1"/>
<circle cx="391.8" cy="357.7" r="1.0" fill="#ffffff" opacity="1"/>
<circle cx="406.6" cy="352.9" r="0.9" fill="#f2c79a" opacity="1"/>
<circle cx="388.4" cy="375.6" r="0.9" fill="#f2c79a" opacity="1"/>
<circle cx="412.7" cy="379.0" r="0.9" fill="#f2c79a" opacity="1"/>
<circle cx="425.9" cy="385.4" r="0.8" fill="#5f8f8f" opacity="0.55"/>
<circle cx="410.0" cy="366.1" r="0.9" fill="#e8dca0" opacity="1"/>
<circle cx="649.0" cy="342.7" r="1.0" fill="#ffffff" opacity="1"/>
<circle cx="661.2" cy="347.9" r="1.0" fill="#ffffff" opacity="1"/>
<circle cx="684.6" cy="346.8" r="0.8" fill="#5f8f8f" opacity="0.55"/>
<circle cx="693.0" cy="379.7" r="0.8" fill="#5f8f8f" opacity="0.55"/>
<circle cx="653.5" cy="367.2" r="1.0" fill="#bfe3ff" opacity="1"/>
<circle cx="566.6" cy="375.6" r="0.8" fill="#5f8f8f" opacity="0.55"/>
<circle cx="600.6" cy="368.4" r="0.9" fill="#f2c79a" opacity="1"/>
<circle cx="534.8" cy="379.0" r="0.8" fill="#5f8f8f" opacity="0.55"/>
<circle cx="525.7" cy="388.8" r="0.9" fill="#f2c79a" opacity="1"/>
<circle cx="524.6" cy="365.6" r="0.9" fill="#f2c79a" opacity="1"/>
<circle cx="647.1" cy="397.4" r="1.0" fill="#bfe3ff" opacity="1"/>
<circle cx="596.1" cy="432.4" r="1.0" fill="#ffffff" opacity="1"/>
<circle cx="646.5" cy="433.5" r="1.0" fill="#ffffff" opacity="1"/>
<circle cx="679.6" cy="429.0" r="1.0" fill="#ffffff" opacity="1"/>
<circle cx="612.6" cy="414.9" r="0.9" fill="#f2c79a" opacity="1"/>
<circle cx="593.8" cy="411.9" r="0.8" fill="#5f8f8f" opacity="0.55"/>
<circle cx="563.2" cy="429.0" r="0.8" fill="#5f8f8f" opacity="0.55"/>
<circle cx="522.8" cy="430.8" r="0.9" fill="#f2c79a" opacity="1"/>
<circle cx="495.1" cy="436.9" r="0.9" fill="#f2c79a" opacity="1"/>
<circle cx="458.8" cy="441.7" r="1.0" fill="#bfe3ff" opacity="1"/>
<circle cx="412.2" cy="431.2" r="1.0" fill="#bfe3ff" opacity="1"/>
<circle cx="415.6" cy="451.7" r="1.0" fill="#ffffff" opacity="1"/>
<circle cx="482.6" cy="411.9" r="0.8" fill="#5f8f8f" opacity="0.55"/>
<circle cx="426.5" cy="410.8" r="0.8" fill="#5f8f8f" opacity="0.55"/>
<circle cx="441.7" cy="420.6" r="0.8" fill="#5f8f8f" opacity="0.55"/>
<circle cx="478.7" cy="444.9" r="0.8" fill="#5f8f8f" opacity="0.55"/>
<circle cx="459.4" cy="462.6" r="1.0" fill="#bfe3ff" opacity="1"/>
<circle cx="488.7" cy="462.6" r="0.8" fill="#5f8f8f" opacity="0.55"/>
<circle cx="480.8" cy="463.0" r="0.8" fill="#5f8f8f" opacity="0.55"/>
<circle cx="426.3" cy="480.7" r="1.0" fill="#ffffff" opacity="1"/>
<circle cx="440.6" cy="480.3" r="0.9" fill="#e8dca0" opacity="1"/>
<circle cx="442.9" cy="484.6" r="1.0" fill="#bfe3ff" opacity="1"/>
<circle cx="407.7" cy="489.8" r="3.2" fill="url(#gb)"/>
<circle cx="386.6" cy="496.6" r="3.2" fill="url(#gw)"/>
<circle cx="470.8" cy="506.1" r="0.9" fill="#f2c79a" opacity="1"/>
<circle cx="416.8" cy="505.7" r="0.9" fill="#f2c79a" opacity="1"/>
<circle cx="476.5" cy="498.2" r="0.9" fill="#f2c79a" opacity="1"/>
<circle cx="409.3" cy="503.0" r="0.9" fill="#f2c79a" opacity="1"/>
<circle cx="564.3" cy="490.2" r="1.0" fill="#ffffff" opacity="1"/>
<circle cx="585.9" cy="471.6" r="0.9" fill="#f2c79a" opacity="1"/>
<circle cx="561.6" cy="451.9" r="1.0" fill="#bfe3ff" opacity="1"/>
<circle cx="577.9" cy="440.5" r="0.8" fill="#5f8f8f" opacity="0.55"/>
<circle cx="600.6" cy="444.9" r="0.9" fill="#f2c79a" opacity="1"/>
<circle cx="621.0" cy="495.9" r="1.0" fill="#ffffff" opacity="1"/>
<circle cx="627.4" cy="479.6" r="0.9" fill="#f2c79a" opacity="1"/>
<circle cx="671.4" cy="465.3" r="0.9" fill="#f2c79a" opacity="1"/>
<circle cx="681.6" cy="483.7" r="0.9" fill="#f2c79a" opacity="1"/>
<circle cx="610.4" cy="473.9" r="0.8" fill="#5f8f8f" opacity="0.55"/>
<circle cx="568.4" cy="471.6" r="0.8" fill="#5f8f8f" opacity="0.55"/>
<circle cx="588.1" cy="477.8" r="0.8" fill="#5f8f8f" opacity="0.55"/>
<circle cx="559.8" cy="481.9" r="0.9" fill="#f2c79a" opacity="1"/>
<circle cx="537.5" cy="483.7" r="0.9" fill="#f2c79a" opacity="1"/>
<circle cx="534.8" cy="509.8" r="0.8" fill="#5f8f8f" opacity="0.55"/>
<circle cx="661.4" cy="505.0" r="3.2" fill="url(#gb)"/>
<circle cx="672.8" cy="508.6" r="3.2" fill="url(#gb)"/>
<circle cx="684.1" cy="510.2" r="3.2" fill="url(#gb)"/>
<circle cx="703.9" cy="475.5" r="1.0" fill="#bfe3ff" opacity="1"/>
<circle cx="497.3" cy="518.6" r="1.0" fill="#bfe3ff" opacity="1"/>
<circle cx="653.5" cy="367.2" r="3.2" fill="url(#gb)"/>
<circle cx="549.1" cy="342.7" r="1.0" fill="#bfe3ff" opacity="1"/>
<circle cx="449.2" cy="343.9" r="0.9" fill="#f2c79a" opacity="1"/>
<circle cx="600.2" cy="368.4" r="0.9" fill="#f2c79a" opacity="1"/>
<circle cx="728.4" cy="346.1" r="1.0" fill="#ffffff" opacity="1"/>
<circle cx="762.9" cy="344.5" r="1.0" fill="#ffffff" opacity="1"/>
<circle cx="742.4" cy="356.6" r="1.0" fill="#ffffff" opacity="1"/>
<circle cx="728.8" cy="365.6" r="0.8" fill="#5f8f8f" opacity="0.55"/>
<circle cx="738.6" cy="369.5" r="0.8" fill="#5f8f8f" opacity="0.55"/>
<circle cx="778.8" cy="347.5" r="1.0" fill="#bfe3ff" opacity="1"/>
<circle cx="810.1" cy="357.0" r="1.0" fill="#ffffff" opacity="1"/>
<circle cx="838.9" cy="357.0" r="1.0" fill="#ffffff" opacity="1"/>
<circle cx="855.9" cy="363.4" r="1.0" fill="#ffffff" opacity="1"/>
<circle cx="862.7" cy="372.5" r="1.0" fill="#ffffff" opacity="1"/>
<circle cx="863.9" cy="346.1" r="1.0" fill="#ffffff" opacity="1"/>
<circle cx="837.8" cy="384.7" r="1.0" fill="#ffffff" opacity="1"/>
<circle cx="820.1" cy="382.7" r="3.2" fill="url(#gb)"/>
<circle cx="838.2" cy="394.5" r="1.0" fill="#bfe3ff" opacity="1"/>
<circle cx="867.7" cy="399.7" r="1.0" fill="#ffffff" opacity="1"/>
<circle cx="809.4" cy="406.5" r="0.9" fill="#f2c79a" opacity="1"/>
<circle cx="807.8" cy="410.8" r="1.0" fill="#ffffff" opacity="1"/>
<circle cx="811.7" cy="421.0" r="1.0" fill="#ffffff" opacity="1"/>
<circle cx="808.7" cy="430.1" r="1.0" fill="#ffffff" opacity="1"/>
<circle cx="829.8" cy="413.8" r="1.0" fill="#ffffff" opacity="1"/>
<circle cx="870.7" cy="426.2" r="1.0" fill="#ffffff" opacity="1"/>
<circle cx="869.5" cy="433.1" r="0.8" fill="#5f8f8f" opacity="0.55"/>
<circle cx="846.9" cy="438.0" r="1.0" fill="#ffffff" opacity="1"/>
<circle cx="898.6" cy="433.1" r="1.0" fill="#ffffff" opacity="1"/>
<circle cx="925.6" cy="404.0" r="1.0" fill="#ffffff" opacity="1"/>
<circle cx="951.7" cy="416.5" r="1.0" fill="#ffffff" opacity="1"/>
<circle cx="972.1" cy="446.0" r="1.0" fill="#ffffff" opacity="1"/>
<circle cx="955.1" cy="458.5" r="1.0" fill="#ffffff" opacity="1"/>
<circle cx="960.8" cy="463.2" r="1.0" fill="#ffffff" opacity="1"/>
<circle cx="1007.5" cy="475.7" r="1.0" fill="#ffffff" opacity="1"/>
<circle cx="957.6" cy="481.4" r="1.0" fill="#ffffff" opacity="1"/>
<circle cx="960.8" cy="485.9" r="1.0" fill="#ffffff" opacity="1"/>
<circle cx="924.7" cy="484.6" r="1.0" fill="#bfe3ff" opacity="1"/>
<circle cx="926.7" cy="478.9" r="1.0" fill="#bfe3ff" opacity="1"/>
<circle cx="907.0" cy="483.0" r="1.0" fill="#ffffff" opacity="1"/>
<circle cx="902.0" cy="467.8" r="1.0" fill="#ffffff" opacity="1"/>
<circle cx="905.9" cy="455.8" r="1.0" fill="#bfe3ff" opacity="1"/>
<circle cx="879.3" cy="458.0" r="1.0" fill="#ffffff" opacity="1"/>
<circle cx="885.0" cy="458.5" r="1.0" fill="#ffffff" opacity="1"/>
<circle cx="854.1" cy="488.0" r="1.0" fill="#ffffff" opacity="1"/>
<circle cx="843.4" cy="495.5" r="1.0" fill="#ffffff" opacity="1"/>
<circle cx="838.2" cy="480.7" r="1.0" fill="#ffffff" opacity="1"/>
<circle cx="826.0" cy="490.9" r="0.9" fill="#f2c79a" opacity="1"/>
<circle cx="836.6" cy="493.7" r="1.0" fill="#ffb08a" opacity="1"/>
<circle cx="795.8" cy="497.7" r="1.0" fill="#ffffff" opacity="1"/>
<circle cx="739.0" cy="485.7" r="3.2" fill="url(#gb)"/>
<circle cx="748.1" cy="462.6" r="1.0" fill="#ffffff" opacity="1"/>
<circle cx="749.3" cy="449.6" r="1.0" fill="#bfe3ff" opacity="1"/>
<circle cx="742.9" cy="450.1" r="0.9" fill="#f2c79a" opacity="1"/>
<circle cx="728.8" cy="477.8" r="1.0" fill="#bfe3ff" opacity="1"/>
<circle cx="709.5" cy="405.8" r="1.0" fill="#bfe3ff" opacity="1"/>
<circle cx="748.1" cy="411.5" r="0.8" fill="#5f8f8f" opacity="0.55"/>
<circle cx="757.2" cy="405.1" r="1.0" fill="#ffffff" opacity="1"/>
<circle cx="785.6" cy="403.5" r="0.8" fill="#5f8f8f" opacity="0.55"/>
<circle cx="949.0" cy="372.9" r="3.2" fill="url(#go)"/>
<circle cx="883.8" cy="357.7" r="3.2" fill="url(#gb)"/>
<circle cx="974.0" cy="341.1" r="1.0" fill="#bfe3ff" opacity="1"/>
<circle cx="1022.7" cy="462.6" r="3.2" fill="url(#gb)"/>
<circle cx="1019.3" cy="347.9" r="0.9" fill="#f2c79a" opacity="1"/>
<circle cx="974.4" cy="356.3" r="0.9" fill="#f2c79a" opacity="1"/>
<circle cx="923.3" cy="342.3" r="0.9" fill="#f2c79a" opacity="1"/>
<circle cx="827.6" cy="467.1" r="0.8" fill="#5f8f8f" opacity="0.55"/>
<circle cx="710.7" cy="368.4" r="0.8" fill="#5f8f8f" opacity="0.55"/>
<circle cx="714.1" cy="501.1" r="1.0" fill="#bfe3ff" opacity="1"/>
<circle cx="865.0" cy="503.4" r="1.0" fill="#bfe3ff" opacity="1"/>
<circle cx="858.2" cy="510.2" r="1.0" fill="#ffffff" opacity="1"/>
<circle cx="1104.4" cy="345.7" r="1.0" fill="#ffffff" opacity="1"/>
<circle cx="1176.6" cy="343.0" r="3.2" fill="url(#gy)"/>
<circle cx="1114.0" cy="357.7" r="3.2" fill="url(#gb)"/>
<circle cx="1142.6" cy="357.7" r="3.2" fill="url(#gy)"/>
<circle cx="1122.6" cy="360.9" r="0.8" fill="#5f8f8f" opacity="0.55"/>
<circle cx="1136.2" cy="355.4" r="1.0" fill="#bfe3ff" opacity="1"/>
<circle cx="1151.0" cy="360.4" r="1.0" fill="#bfe3ff" opacity="1"/>
<circle cx="1128.3" cy="367.2" r="0.9" fill="#f2c79a" opacity="1"/>
<circle cx="1158.9" cy="372.9" r="3.2" fill="url(#go)"/>
<circle cx="1185.7" cy="357.0" r="0.9" fill="#f2c79a" opacity="1"/>
<circle cx="1155.5" cy="355.9" r="0.9" fill="#f2c79a" opacity="1"/>
<circle cx="1087.9" cy="394.9" r="0.9" fill="#f2c79a" opacity="1"/>
<circle cx="1060.2" cy="400.8" r="3.2" fill="url(#gb)"/>
<circle cx="1041.6" cy="377.4" r="0.9" fill="#f2c79a" opacity="1"/>
<circle cx="1185.7" cy="394.9" r="0.9" fill="#f2c79a" opacity="1"/>
<circle cx="1209.3" cy="398.3" r="0.9" fill="#f2c79a" opacity="1"/>
<circle cx="1215.0" cy="401.3" r="0.8" fill="#5f8f8f" opacity="0.55"/>
<circle cx="1224.7" cy="397.9" r="0.9" fill="#f2c79a" opacity="1"/>
<circle cx="1119.2" cy="380.9" r="0.9" fill="#f2c79a" opacity="1"/>
<circle cx="1127.1" cy="410.8" r="0.8" fill="#5f8f8f" opacity="0.55"/>
<circle cx="1120.3" cy="413.3" r="1.0" fill="#bfe3ff" opacity="1"/>
<circle cx="1140.8" cy="412.2" r="0.9" fill="#f2c79a" opacity="1"/>
<circle cx="1126.5" cy="444.4" r="3.2" fill="url(#gb)"/>
<circle cx="1120.3" cy="464.4" r="0.9" fill="#f2c79a" opacity="1"/>
<circle cx="1116.5" cy="451.9" r="0.9" fill="#f2c79a" opacity="1"/>
<circle cx="1136.9" cy="481.9" r="0.9" fill="#f2c79a" opacity="1"/>
<circle cx="1132.4" cy="464.4" r="1.0" fill="#bfe3ff" opacity="1"/>
<circle cx="1155.5" cy="474.4" r="0.9" fill="#e8dca0" opacity="1"/>
<circle cx="1030.0" cy="456.4" r="1.0" fill="#ffffff" opacity="1"/>
<circle cx="1034.8" cy="459.8" r="0.8" fill="#5f8f8f" opacity="0.55"/>
<circle cx="1037.9" cy="471.6" r="1.0" fill="#bfe3ff" opacity="1"/>
<circle cx="1049.5" cy="462.6" r="1.0" fill="#bfe3ff" opacity="1"/>
<circle cx="1068.8" cy="437.1" r="0.8" fill="#5f8f8f" opacity="0.55"/>
<circle cx="1036.8" cy="429.2" r="1.0" fill="#bfe3ff" opacity="1"/>
<circle cx="1080.6" cy="487.1" r="0.9" fill="#f2c79a" opacity="1"/>
<circle cx="1268.3" cy="357.0" r="1.0" fill="#ffffff" opacity="1"/>
<circle cx="1266.7" cy="367.7" r="1.0" fill="#ffffff" opacity="1"/>
<circle cx="1318.2" cy="356.3" r="0.9" fill="#f2c79a" opacity="1"/>
<circle cx="1327.3" cy="370.2" r="3.2" fill="url(#gr)"/>
<circle cx="1297.8" cy="382.0" r="1.0" fill="#bfe3ff" opacity="1"/>
<circle cx="1299.6" cy="384.9" r="0.9" fill="#e8dca0" opacity="1"/>
<circle cx="1331.4" cy="399.0" r="3.2" fill="url(#gb)"/>
<circle cx="1336.4" cy="393.3" r="1.0" fill="#bfe3ff" opacity="1"/>
<circle cx="1258.1" cy="416.7" r="1.0" fill="#bfe3ff" opacity="1"/>
<circle cx="1260.4" cy="439.4" r="0.9" fill="#f2c79a" opacity="1"/>
<circle cx="1318.2" cy="430.1" r="1.0" fill="#bfe3ff" opacity="1"/>
<circle cx="1324.1" cy="435.3" r="1.0" fill="#bfe3ff" opacity="1"/>
<circle cx="1319.4" cy="458.5" r="1.0" fill="#bfe3ff" opacity="1"/>
<circle cx="1290.1" cy="462.6" r="1.0" fill="#bfe3ff" opacity="1"/>
<circle cx="1257.2" cy="476.2" r="1.0" fill="#ffffff" opacity="1"/>
<circle cx="1264.4" cy="474.4" r="0.9" fill="#e8dca0" opacity="1"/>
<circle cx="1271.9" cy="475.0" r="0.9" fill="#f2c79a" opacity="1"/>
<circle cx="1206.6" cy="461.0" r="0.9" fill="#f2c79a" opacity="1"/>
<circle cx="1169.1" cy="438.0" r="0.9" fill="#e8dca0" opacity="1"/>
<circle cx="1211.6" cy="484.1" r="3.2" fill="url(#gb)"/>
<circle cx="1240.2" cy="493.2" r="0.9" fill="#e8dca0" opacity="1"/>
<circle cx="1242.9" cy="508.0" r="0.9" fill="#f2c79a" opacity="1"/>
<circle cx="1235.4" cy="513.2" r="0.8" fill="#5f8f8f" opacity="0.55"/>
<circle cx="1284.9" cy="495.5" r="0.8" fill="#5f8f8f" opacity="0.55"/>
<circle cx="1333.7" cy="501.6" r="0.8" fill="#5f8f8f" opacity="0.55"/>
<circle cx="1121.5" cy="506.4" r="0.9" fill="#f2c79a" opacity="1"/>
<circle cx="1111.9" cy="498.9" r="0.9" fill="#f2c79a" opacity="1"/>
<circle cx="1289.9" cy="346.8" r="0.9" fill="#f2c79a" opacity="1"/>
<circle cx="1227.0" cy="347.9" r="0.8" fill="#5f8f8f" opacity="0.55"/>
<circle cx="1320.1" cy="470.0" r="0.8" fill="#5f8f8f" opacity="0.55"/>
<circle cx="1208.8" cy="429.0" r="0.8" fill="#5f8f8f" opacity="0.55"/>
<circle cx="104.3" cy="544.3" r="3.2" fill="url(#gb)"/>
<circle cx="141.0" cy="572.9" r="3.2" fill="url(#gb)"/>
<circle cx="203.4" cy="548.8" r="3.2" fill="url(#gb)"/>
<circle cx="99.5" cy="589.2" r="3.2" fill="url(#gb)"/>
<circle cx="105.4" cy="590.4" r="1.0" fill="#ffffff" opacity="1"/>
<circle cx="91.6" cy="557.4" r="0.9" fill="#f2c79a" opacity="1"/>
<circle cx="83.8" cy="576.7" r="1.0" fill="#bfe3ff" opacity="1"/>
<circle cx="103.1" cy="573.8" r="1.0" fill="#ffb08a" opacity="1"/>
<circle cx="135.4" cy="545.4" r="0.8" fill="#5f8f8f" opacity="0.55"/>
<circle cx="150.1" cy="561.5" r="1.0" fill="#bfe3ff" opacity="1"/>
<circle cx="185.3" cy="543.4" r="0.8" fill="#5f8f8f" opacity="0.55"/>
<circle cx="157.6" cy="531.8" r="0.8" fill="#5f8f8f" opacity="0.55"/>
<circle cx="167.1" cy="542.7" r="0.9" fill="#f2c79a" opacity="1"/>
<circle cx="132.0" cy="535.9" r="0.8" fill="#5f8f8f" opacity="0.55"/>
<circle cx="70.7" cy="604.0" r="0.9" fill="#f2c79a" opacity="1"/>
<circle cx="77.5" cy="594.9" r="1.0" fill="#bfe3ff" opacity="1"/>
<circle cx="69.1" cy="630.1" r="3.2" fill="url(#gb)"/>
<circle cx="99.0" cy="621.7" r="1.0" fill="#bfe3ff" opacity="1"/>
<circle cx="91.1" cy="617.1" r="0.9" fill="#e8dca0" opacity="1"/>
<circle cx="116.1" cy="618.0" r="1.0" fill="#bfe3ff" opacity="1"/>
<circle cx="130.8" cy="619.9" r="1.0" fill="#bfe3ff" opacity="1"/>
<circle cx="117.2" cy="603.3" r="1.0" fill="#bfe3ff" opacity="1"/>
<circle cx="133.1" cy="589.2" r="1.0" fill="#bfe3ff" opacity="1"/>
<circle cx="139.9" cy="609.7" r="0.9" fill="#f2c79a" opacity="1"/>
<circle cx="147.8" cy="632.8" r="3.2" fill="url(#gr)"/>
<circle cx="194.4" cy="605.6" r="1.0" fill="#bfe3ff" opacity="1"/>
<circle cx="154.7" cy="658.4" r="0.9" fill="#e8dca0" opacity="1"/>
<circle cx="211.4" cy="584.2" r="1.0" fill="#bfe3ff" opacity="1"/>
<circle cx="223.2" cy="587.6" r="1.0" fill="#ffffff" opacity="1"/>
<circle cx="217.7" cy="574.0" r="1.0" fill="#bfe3ff" opacity="1"/>
<circle cx="230.0" cy="566.1" r="1.0" fill="#bfe3ff" opacity="1"/>
<circle cx="227.3" cy="571.5" r="0.9" fill="#f2c79a" opacity="1"/>
<circle cx="266.5" cy="569.3" r="3.2" fill="url(#go)"/>
<circle cx="277.2" cy="598.3" r="1.0" fill="#ffb08a" opacity="1"/>
<circle cx="275.4" cy="602.8" r="1.0" fill="#bfe3ff" opacity="1"/>
<circle cx="268.1" cy="613.1" r="0.9" fill="#e8dca0" opacity="1"/>
<circle cx="258.4" cy="620.3" r="1.0" fill="#bfe3ff" opacity="1"/>
<circle cx="263.1" cy="641.0" r="1.0" fill="#bfe3ff" opacity="1"/>
<circle cx="233.0" cy="624.9" r="0.9" fill="#f2c79a" opacity="1"/>
<circle cx="216.6" cy="624.9" r="0.9" fill="#f2c79a" opacity="1"/>
<circle cx="234.1" cy="638.0" r="0.8" fill="#5f8f8f" opacity="0.55"/>
<circle cx="272.7" cy="664.6" r="3.2" fill="url(#go)"/>
<circle cx="325.3" cy="636.9" r="3.2" fill="url(#gb)"/>
<circle cx="314.0" cy="545.6" r="3.2" fill="url(#go)"/>
<circle cx="314.7" cy="541.6" r="1.0" fill="#bfe3ff" opacity="1"/>
<circle cx="309.7" cy="573.8" r="0.8" fill="#5f8f8f" opacity="0.55"/>
<circle cx="372.5" cy="557.4" r="1.0" fill="#ffffff" opacity="1"/>
<circle cx="343.7" cy="643.7" r="1.0" fill="#ffffff" opacity="1"/>
<circle cx="382.7" cy="524.5" r="3.2" fill="url(#gb)"/>
<circle cx="253.8" cy="521.1" r="0.9" fill="#f2c79a" opacity="1"/>
<circle cx="280.6" cy="522.3" r="1.0" fill="#bfe3ff" opacity="1"/>
<circle cx="331.7" cy="694.8" r="1.0" fill="#ffffff" opacity="1"/>
<circle cx="100.9" cy="666.8" r="1.0" fill="#bfe3ff" opacity="1"/>
<circle cx="129.2" cy="686.1" r="0.8" fill="#5f8f8f" opacity="0.55"/>
<circle cx="154.7" cy="683.0" r="0.8" fill="#5f8f8f" opacity="0.55"/>
<circle cx="276.1" cy="695.9" r="1.0" fill="#bfe3ff" opacity="1"/>
<circle cx="370.9" cy="688.0" r="0.9" fill="#f2c79a" opacity="1"/>
<circle cx="497.8" cy="521.1" r="3.2" fill="url(#gb)"/>
<circle cx="449.7" cy="527.5" r="1.0" fill="#bfe3ff" opacity="1"/>
<circle cx="450.8" cy="534.8" r="1.0" fill="#bfe3ff" opacity="1"/>
<circle cx="484.2" cy="550.6" r="1.0" fill="#ffffff" opacity="1"/>
<circle cx="539.3" cy="531.3" r="1.0" fill="#bfe3ff" opacity="1"/>
<circle cx="558.6" cy="542.2" r="3.2" fill="url(#gy)"/>
<circle cx="566.6" cy="560.4" r="3.2" fill="url(#gb)"/>
<circle cx="509.8" cy="548.8" r="0.9" fill="#f2c79a" opacity="1"/>
<circle cx="531.4" cy="540.9" r="0.8" fill="#5f8f8f" opacity="0.55"/>
<circle cx="424.0" cy="588.8" r="3.2" fill="url(#gb)"/>
<circle cx="398.6" cy="590.4" r="1.0" fill="#bfe3ff" opacity="1"/>
<circle cx="406.6" cy="610.8" r="1.0" fill="#ffffff" opacity="1"/>
<circle cx="389.1" cy="574.5" r="0.9" fill="#f2c79a" opacity="1"/>
<circle cx="387.7" cy="556.3" r="0.8" fill="#5f8f8f" opacity="0.55"/>
<circle cx="486.0" cy="572.7" r="0.8" fill="#5f8f8f" opacity="0.55"/>
<circle cx="470.1" cy="594.9" r="0.9" fill="#f2c79a" opacity="1"/>
<circle cx="445.8" cy="632.8" r="0.9" fill="#f2c79a" opacity="1"/>
<circle cx="434.5" cy="650.5" r="1.0" fill="#bfe3ff" opacity="1"/>
<circle cx="440.6" cy="658.4" r="1.0" fill="#ffffff" opacity="1"/>
<circle cx="452.0" cy="653.9" r="0.8" fill="#5f8f8f" opacity="0.55"/>
<circle cx="458.1" cy="664.6" r="0.9" fill="#f2c79a" opacity="1"/>
<circle cx="409.5" cy="664.1" r="0.9" fill="#f2c79a" opacity="1"/>
<circle cx="395.2" cy="646.4" r="0.8" fill="#5f8f8f" opacity="0.55"/>
<circle cx="419.0" cy="651.0" r="1.0" fill="#bfe3ff" opacity="1"/>
<circle cx="449.2" cy="671.6" r="3.2" fill="url(#gb)"/>
<circle cx="449.7" cy="692.0" r="0.9" fill="#f2c79a" opacity="1"/>
<circle cx="486.0" cy="647.8" r="0.9" fill="#e8dca0" opacity="1"/>
<circle cx="533.0" cy="653.9" r="0.8" fill="#5f8f8f" opacity="0.55"/>
<circle cx="525.7" cy="674.8" r="0.8" fill="#5f8f8f" opacity="0.55"/>
<circle cx="548.0" cy="692.9" r="0.9" fill="#f2c79a" opacity="1"/>
<circle cx="558.6" cy="638.5" r="1.0" fill="#bfe3ff" opacity="1"/>
<circle cx="591.5" cy="663.4" r="1.0" fill="#bfe3ff" opacity="1"/>
<circle cx="622.2" cy="695.2" r="1.0" fill="#ffb08a" opacity="1"/>
<circle cx="643.7" cy="696.6" r="1.0" fill="#ffffff" opacity="1"/>
<circle cx="628.5" cy="660.0" r="1.0" fill="#ffffff" opacity="1"/>
<circle cx="634.0" cy="661.9" r="0.9" fill="#f2c79a" opacity="1"/>
<circle cx="631.9" cy="669.8" r="0.9" fill="#f2c79a" opacity="1"/>
<circle cx="663.0" cy="671.6" r="0.9" fill="#f2c79a" opacity="1"/>
<circle cx="684.6" cy="670.2" r="1.0" fill="#ffffff" opacity="1"/>
<circle cx="677.8" cy="659.6" r="0.8" fill="#5f8f8f" opacity="0.55"/>
<circle cx="664.8" cy="612.4" r="1.0" fill="#ffffff" opacity="1"/>
<circle cx="645.3" cy="626.2" r="0.9" fill="#e8dca0" opacity="1"/>
<circle cx="614.9" cy="597.8" r="3.2" fill="url(#gb)"/>
<circle cx="625.6" cy="606.2" r="1.0" fill="#bfe3ff" opacity="1"/>
<circle cx="633.5" cy="602.2" r="1.0" fill="#bfe3ff" opacity="1"/>
<circle cx="604.0" cy="594.9" r="0.8" fill="#5f8f8f" opacity="0.55"/>
<circle cx="619.9" cy="592.2" r="0.8" fill="#5f8f8f" opacity="0.55"/>
<circle cx="600.2" cy="533.2" r="3.2" fill="url(#gb)"/>
<circle cx="628.5" cy="535.4" r="1.0" fill="#bfe3ff" opacity="1"/>
<circle cx="642.1" cy="535.4" r="3.2" fill="url(#gb)"/>
<circle cx="645.6" cy="531.3" r="1.0" fill="#bfe3ff" opacity="1"/>
<circle cx="649.4" cy="529.1" r="1.0" fill="#bfe3ff" opacity="1"/>
<circle cx="637.6" cy="546.1" r="1.0" fill="#bfe3ff" opacity="1"/>
<circle cx="644.9" cy="560.9" r="0.9" fill="#f2c79a" opacity="1"/>
<circle cx="660.3" cy="566.5" r="3.2" fill="url(#gb)"/>
<circle cx="681.2" cy="533.6" r="1.0" fill="#bfe3ff" opacity="1"/>
<circle cx="685.7" cy="573.8" r="3.2" fill="url(#gb)"/>
<circle cx="680.7" cy="594.9" r="0.8" fill="#5f8f8f" opacity="0.55"/>
<circle cx="659.2" cy="591.0" r="1.0" fill="#bfe3ff" opacity="1"/>
<circle cx="698.2" cy="527.9" r="1.0" fill="#bfe3ff" opacity="1"/>
<circle cx="703.9" cy="599.9" r="1.0" fill="#bfe3ff" opacity="1"/>
<circle cx="691.4" cy="525.7" r="0.9" fill="#f2c79a" opacity="1"/>
<circle cx="655.8" cy="579.0" r="3.2" fill="url(#gw)"/>
<circle cx="520.5" cy="585.1" r="0.9" fill="#e8dca0" opacity="1"/>
<circle cx="519.6" cy="605.6" r="0.9" fill="#e8dca0" opacity="1"/>
<circle cx="551.8" cy="622.8" r="3.2" fill="url(#gy)"/>
<circle cx="565.9" cy="599.9" r="0.9" fill="#e8dca0" opacity="1"/>
<circle cx="603.3" cy="624.4" r="1.0" fill="#bfe3ff" opacity="1"/>
<circle cx="400.9" cy="604.0" r="0.9" fill="#e8dca0" opacity="1"/>
<circle cx="397.5" cy="622.6" r="0.9" fill="#f2c79a" opacity="1"/>
<circle cx="424.3" cy="663.4" r="0.9" fill="#f2c79a" opacity="1"/>
<circle cx="570.4" cy="668.2" r="0.9" fill="#f2c79a" opacity="1"/>
<circle cx="732.2" cy="524.1" r="0.9" fill="#f2c79a" opacity="1"/>
<circle cx="809.4" cy="528.6" r="1.0" fill="#ffffff" opacity="1"/>
<circle cx="848.0" cy="530.2" r="1.0" fill="#ffffff" opacity="1"/>
<circle cx="844.6" cy="524.5" r="1.0" fill="#bfe3ff" opacity="1"/>
<circle cx="833.9" cy="540.9" r="1.0" fill="#bfe3ff" opacity="1"/>
<circle cx="811.0" cy="547.2" r="1.0" fill="#ffffff" opacity="1"/>
<circle cx="876.4" cy="554.5" r="1.0" fill="#ffffff" opacity="1"/>
<circle cx="877.5" cy="562.0" r="1.0" fill="#ffffff" opacity="1"/>
<circle cx="897.9" cy="527.9" r="1.0" fill="#ffffff" opacity="1"/>
<circle cx="910.4" cy="574.5" r="1.0" fill="#ffffff" opacity="1"/>
<circle cx="887.3" cy="589.9" r="1.0" fill="#ffffff" opacity="1"/>
<circle cx="816.2" cy="580.8" r="1.0" fill="#ffffff" opacity="1"/>
<circle cx="816.2" cy="596.5" r="1.0" fill="#ffffff" opacity="1"/>
<circle cx="852.1" cy="580.1" r="1.0" fill="#bfe3ff" opacity="1"/>
<circle cx="854.3" cy="579.0" r="1.0" fill="#ffffff" opacity="1"/>
<circle cx="876.8" cy="602.2" r="1.0" fill="#ffffff" opacity="1"/>
<circle cx="839.6" cy="616.9" r="1.0" fill="#ffffff" opacity="1"/>
<circle cx="852.1" cy="615.8" r="1.0" fill="#bfe3ff" opacity="1"/>
<circle cx="917.9" cy="601.7" r="1.0" fill="#ffffff" opacity="1"/>
<circle cx="939.9" cy="568.3" r="1.0" fill="#ffffff" opacity="1"/>
<circle cx="963.1" cy="576.7" r="1.0" fill="#ffffff" opacity="1"/>
<circle cx="966.0" cy="602.4" r="1.0" fill="#ffffff" opacity="1"/>
<circle cx="977.4" cy="601.7" r="1.0" fill="#ffffff" opacity="1"/>
<circle cx="984.6" cy="557.0" r="1.0" fill="#ffffff" opacity="1"/>
<circle cx="1014.8" cy="562.7" r="1.0" fill="#ffffff" opacity="1"/>
<circle cx="964.9" cy="550.2" r="1.0" fill="#bfe3ff" opacity="1"/>
<circle cx="1015.5" cy="585.4" r="1.0" fill="#bfe3ff" opacity="1"/>
<circle cx="944.0" cy="619.4" r="0.9" fill="#f2c79a" opacity="1"/>
<circle cx="951.3" cy="648.2" r="1.0" fill="#ffffff" opacity="1"/>
<circle cx="928.6" cy="646.4" r="3.2" fill="url(#gb)"/>
<circle cx="927.4" cy="654.4" r="3.2" fill="url(#go)"/>
<circle cx="882.0" cy="659.6" r="1.0" fill="#ffffff" opacity="1"/>
<circle cx="877.5" cy="663.4" r="1.0" fill="#ffffff" opacity="1"/>
<circle cx="905.4" cy="663.4" r="1.0" fill="#ffffff" opacity="1"/>
<circle cx="813.5" cy="643.0" r="1.0" fill="#ffffff" opacity="1"/>
<circle cx="810.5" cy="653.9" r="0.9" fill="#e8dca0" opacity="1"/>
<circle cx="803.3" cy="682.3" r="0.9" fill="#e8dca0" opacity="1"/>
<circle cx="852.1" cy="689.8" r="0.9" fill="#f2c79a" opacity="1"/>
<circle cx="726.1" cy="677.7" r="1.0" fill="#ffffff" opacity="1"/>
<circle cx="738.6" cy="686.4" r="1.0" fill="#ffffff" opacity="1"/>
<circle cx="741.3" cy="674.3" r="0.9" fill="#f2c79a" opacity="1"/>
<circle cx="710.7" cy="646.6" r="0.9" fill="#f2c79a" opacity="1"/>
<circle cx="745.4" cy="551.8" r="0.9" fill="#f2c79a" opacity="1"/>
<circle cx="756.7" cy="554.5" r="3.2" fill="url(#gb)"/>
<circle cx="781.5" cy="543.4" r="1.0" fill="#bfe3ff" opacity="1"/>
<circle cx="792.4" cy="538.6" r="3.2" fill="url(#gy)"/>
<circle cx="803.7" cy="526.1" r="1.0" fill="#bfe3ff" opacity="1"/>
<circle cx="986.4" cy="522.3" r="1.0" fill="#bfe3ff" opacity="1"/>
<circle cx="991.0" cy="524.5" r="1.0" fill="#bfe3ff" opacity="1"/>
<circle cx="987.6" cy="530.9" r="1.0" fill="#ffffff" opacity="1"/>
<circle cx="769.7" cy="590.8" r="0.8" fill="#5f8f8f" opacity="0.55"/>
<circle cx="770.8" cy="605.1" r="0.9" fill="#f2c79a" opacity="1"/>
<circle cx="784.9" cy="601.7" r="0.8" fill="#5f8f8f" opacity="0.55"/>
<circle cx="757.2" cy="638.7" r="0.8" fill="#5f8f8f" opacity="0.55"/>
<circle cx="802.6" cy="663.0" r="0.8" fill="#5f8f8f" opacity="0.55"/>
<circle cx="933.8" cy="630.8" r="0.8" fill="#5f8f8f" opacity="0.55"/>
<circle cx="877.5" cy="641.9" r="0.8" fill="#5f8f8f" opacity="0.55"/>
<circle cx="729.5" cy="600.6" r="1.0" fill="#bfe3ff" opacity="1"/>
<circle cx="742.0" cy="616.9" r="1.0" fill="#bfe3ff" opacity="1"/>
<circle cx="752.0" cy="675.9" r="0.9" fill="#f2c79a" opacity="1"/>
<circle cx="897.9" cy="579.5" r="3.2" fill="url(#gb)"/>
<circle cx="891.1" cy="532.5" r="0.9" fill="#f2c79a" opacity="1"/>
<circle cx="1052.2" cy="521.1" r="0.9" fill="#f2c79a" opacity="1"/>
<circle cx="1098.8" cy="523.9" r="0.8" fill="#5f8f8f" opacity="0.55"/>
<circle cx="1098.3" cy="555.6" r="0.9" fill="#f2c79a" opacity="1"/>
<circle cx="1085.1" cy="569.5" r="3.2" fill="url(#gb)"/>
<circle cx="1096.5" cy="572.7" r="1.0" fill="#bfe3ff" opacity="1"/>
<circle cx="1153.9" cy="555.6" r="1.0" fill="#ffffff" opacity="1"/>
<circle cx="1163.0" cy="544.3" r="0.9" fill="#f2c79a" opacity="1"/>
<circle cx="1177.1" cy="543.8" r="3.2" fill="url(#gb)"/>
<circle cx="1161.9" cy="547.9" r="1.0" fill="#bfe3ff" opacity="1"/>
<circle cx="1181.6" cy="587.0" r="1.0" fill="#ffffff" opacity="1"/>
<circle cx="1176.6" cy="607.4" r="0.9" fill="#e8dca0" opacity="1"/>
<circle cx="1215.2" cy="603.3" r="1.0" fill="#ffffff" opacity="1"/>
<circle cx="1236.5" cy="563.6" r="1.0" fill="#ffffff" opacity="1"/>
<circle cx="1260.4" cy="581.3" r="3.2" fill="url(#gr)"/>
<circle cx="1286.0" cy="557.9" r="1.0" fill="#bfe3ff" opacity="1"/>
<circle cx="1301.4" cy="533.2" r="1.0" fill="#bfe3ff" opacity="1"/>
<circle cx="1338.2" cy="568.3" r="1.0" fill="#bfe3ff" opacity="1"/>
<circle cx="1332.5" cy="589.2" r="1.0" fill="#bfe3ff" opacity="1"/>
<circle cx="1298.0" cy="616.9" r="1.0" fill="#bfe3ff" opacity="1"/>
<circle cx="1311.4" cy="640.7" r="1.0" fill="#ffffff" opacity="1"/>
<circle cx="1284.4" cy="646.4" r="0.9" fill="#f2c79a" opacity="1"/>
<circle cx="1321.2" cy="678.4" r="3.2" fill="url(#gb)"/>
<circle cx="1236.1" cy="635.3" r="0.9" fill="#f2c79a" opacity="1"/>
<circle cx="1213.4" cy="656.6" r="1.0" fill="#bfe3ff" opacity="1"/>
<circle cx="1208.4" cy="686.8" r="0.9" fill="#f2c79a" opacity="1"/>
<circle cx="1242.9" cy="622.8" r="0.9" fill="#e8dca0" opacity="1"/>
<circle cx="1255.8" cy="623.9" r="0.8" fill="#5f8f8f" opacity="0.55"/>
<circle cx="1250.8" cy="654.6" r="0.9" fill="#e8dca0" opacity="1"/>
<circle cx="1279.2" cy="663.4" r="0.9" fill="#e8dca0" opacity="1"/>
<circle cx="1292.8" cy="663.0" r="0.8" fill="#5f8f8f" opacity="0.55"/>
<circle cx="1217.9" cy="641.9" r="0.9" fill="#f2c79a" opacity="1"/>
<circle cx="1030.0" cy="597.2" r="1.0" fill="#ffffff" opacity="1"/>
<circle cx="1054.5" cy="622.6" r="1.0" fill="#ffffff" opacity="1"/>
<circle cx="1060.2" cy="635.1" r="1.0" fill="#ffffff" opacity="1"/>
<circle cx="1055.2" cy="653.9" r="1.0" fill="#ffffff" opacity="1"/>
<circle cx="1061.3" cy="660.3" r="1.0" fill="#ffffff" opacity="1"/>
<circle cx="1060.2" cy="666.8" r="1.0" fill="#ffffff" opacity="1"/>
<circle cx="1077.7" cy="661.9" r="1.0" fill="#ffffff" opacity="1"/>
<circle cx="1038.2" cy="668.7" r="1.0" fill="#ffffff" opacity="1"/>
<circle cx="1040.2" cy="604.0" r="0.8" fill="#5f8f8f" opacity="0.55"/>
<circle cx="1072.7" cy="623.9" r="0.8" fill="#5f8f8f" opacity="0.55"/>
<circle cx="1126.5" cy="646.4" r="3.2" fill="url(#gr)"/>
<circle cx="1134.4" cy="645.3" r="1.0" fill="#ffffff" opacity="1"/>
<circle cx="1140.8" cy="655.5" r="0.9" fill="#e8dca0" opacity="1"/>
<circle cx="1105.6" cy="660.0" r="0.9" fill="#e8dca0" opacity="1"/>
<circle cx="1129.9" cy="681.8" r="3.2" fill="url(#gb)"/>
<circle cx="1122.6" cy="695.9" r="1.0" fill="#bfe3ff" opacity="1"/>
<circle cx="1135.8" cy="590.8" r="0.8" fill="#5f8f8f" opacity="0.55"/>
<circle cx="1127.8" cy="572.7" r="0.9" fill="#e8dca0" opacity="1"/>
<circle cx="1153.2" cy="582.9" r="0.9" fill="#e8dca0" opacity="1"/>
<circle cx="1303.0" cy="599.0" r="0.9" fill="#e8dca0" opacity="1"/>
<circle cx="1308.7" cy="554.0" r="0.9" fill="#e8dca0" opacity="1"/>
<circle cx="1330.9" cy="575.6" r="0.9" fill="#e8dca0" opacity="1"/>
</g>
<circle cx="703.8" cy="430" r="40.5" fill="none" stroke="#e6e6e6" stroke-width="1.1"/>
<circle cx="553.6" cy="265" r="4.2" fill="url(#gy)"/>
<circle cx="682" cy="178.6" r="6.4" fill="url(#gb)"/>
<circle cx="475.8" cy="477.8" r="4.6" fill="url(#gb)"/>
<circle cx="655.8" cy="579" r="4.2" fill="url(#gb)"/>
<circle cx="705" cy="430.7" r="3.6" fill="url(#gr)"/>
<circle cx="874.1" cy="504" r="4" fill="url(#go)"/>
<circle cx="1000.7" cy="270" r="3.8" fill="url(#go)"/>
<circle cx="734.5" cy="233" r="3.8" fill="url(#gw)"/>
<circle cx="723.3" cy="236.7" r="3.6" fill="#f0c070"/>
<circle cx="985.4" cy="521.4" r="2.4" fill="url(#gb)"/>
<circle cx="988" cy="522.9" r="2.4" fill="url(#gb)"/>
<circle cx="992.5" cy="523.7" r="2.4" fill="url(#gb)"/>
<circle cx="988.8" cy="525.9" r="2.4" fill="url(#gb)"/>
<circle cx="991.6" cy="526.7" r="2.4" fill="url(#gb)"/>
<circle cx="987.8" cy="531" r="1" fill="#fff"/>
<text x="689" y="185.2" fill="#b98f72" font-size="17.3" font-family="Liberation Sans">Venus</text>
<text x="731.5" y="244.5" fill="#b98f72" font-size="17.3" font-family="Liberation Sans">Sol</text>
<text x="563" y="273" fill="#8eaabb" font-size="17.3" font-family="Liberation Sans">Procyon</text>
<text x="1010" y="278" fill="#8eaabb" font-size="17.3" font-family="Liberation Sans">Capella</text>
<text x="714" y="439" fill="#f2f2f2" font-size="17.3" font-family="Liberation Sans">Betelgeuse</text>
<text x="485.5" y="488" fill="#8eaabb" font-size="17.3" font-family="Liberation Sans">Sirius</text>
<text x="882" y="513" fill="#8eaabb" font-size="17.3" font-family="Liberation Sans">Aldebaran</text>
<text x="663.7" y="587.5" fill="#8eaabb" font-size="17.3" font-family="Liberation Sans">Rigel</text>
<g transform="translate(1090,462) rotate(45)" fill="none" stroke="#fff" stroke-width="1.1"><rect x="-13.2" y="-2.1" width="26.4" height="4.2" rx="2.1"/><rect x="-2.1" y="-13.2" width="4.2" height="26.4" rx="2.1"/></g>
<rect x="65" y="160" width="100" height="29.7" fill="#02021c"/>
<line x1="65" y1="186.7" x2="101.2" y2="160" stroke="#8a8272" stroke-width="1"/>
<circle cx="151" cy="185" r="0.8" fill="#a09070"/><circle cx="153" cy="179.5" r="0.6" fill="#a09070"/>
<rect x="167" y="163" width="299" height="25.5" fill="#151b23" opacity="0.8"/>
<text x="173.2" y="185" fill="#eef0f2" font-size="13.7" font-family="Liberation Sans">TL: 18:10:30 ()</text><text x="274.6" y="185" fill="#eef0f2" font-size="14.5" font-family="Liberation Sans">dimecres, 6 de juliol de 2016</text>
<rect x="1105" y="160" width="240" height="26" fill="#151b23" opacity="0.8"/>
<text x="1111.2" y="182" fill="#eef0f2" font-size="14.5" font-family="Liberation Sans">Betelgeuse (α Orionis)</text>
<rect x="65" y="675" width="244" height="26" fill="#151b23" opacity="0.8"/>
<text x="71" y="696.8" fill="#eef0f2" font-size="14.1" font-family="Liberation Sans">València, Espanya</text>
</svg></div>
<div class="abs" id="status"></div>
<div class="abs" id="sline"></div>
<div class="abs" style="left:917px;top:705px;font-size:14.2px;line-height:18px;color:#232629;white-space:pre">+313° 59' 21", +06° 22' 03"  03h 23m 36s, +37° 00' 33" (J2016.5)</div>
</body></html>
